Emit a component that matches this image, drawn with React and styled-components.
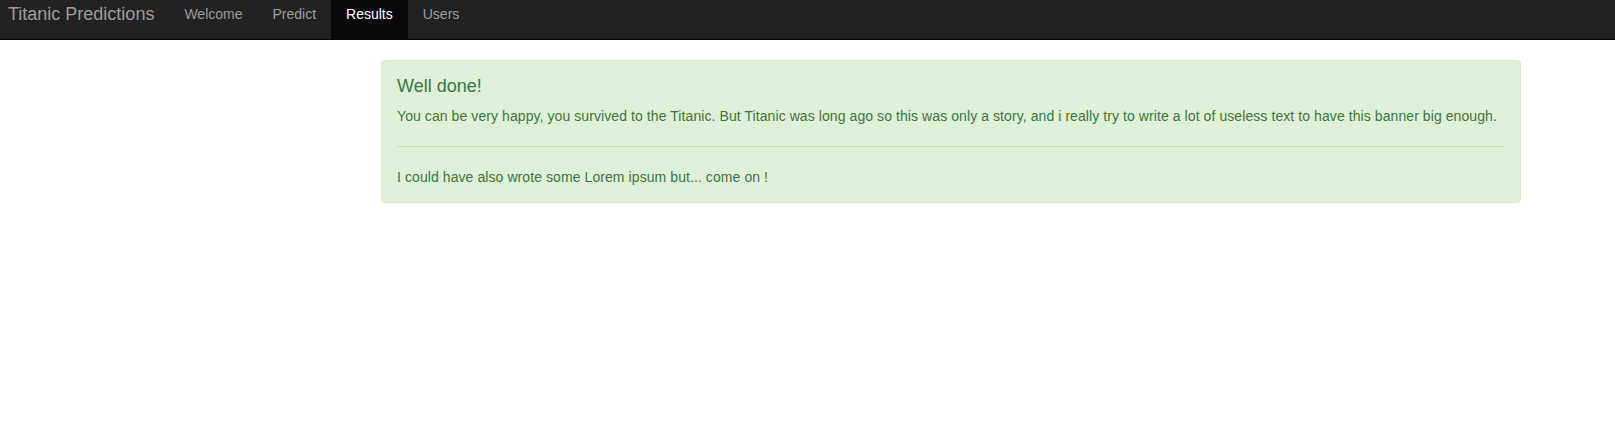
import React from "react";
import styled, { createGlobalStyle } from "styled-components";

const GlobalStyle = createGlobalStyle`
  * { box-sizing: border-box; }
  body {
    margin: 0;
    background: #fff;
    font-family: "Liberation Sans", Arial, Helvetica, sans-serif;
    font-size: 14px;
    line-height: 20px;
    color: #333;
  }
`;

const Navbar = styled.nav`
  display: flex;
  align-items: stretch;
  height: 40px;
  background-color: #222;
  border-bottom: 1px solid #080808;
`;

const Brand = styled.a`
  display: block;
  padding: 4px 15px 0 8px;
  font-size: 18px;
  line-height: 20px;
  color: #9d9d9d;
  text-decoration: none;
`;

const NavList = styled.ul`
  display: flex;
  margin: 0;
  padding: 0;
  list-style: none;
`;

const NavLink = styled.a`
  display: block;
  height: 100%;
  padding: 4px 15px 0;
  line-height: 20px;
  color: ${(p) => (p.$active ? "#fff" : "#9d9d9d")};
  background-color: ${(p) => (p.$active ? "#080808" : "transparent")};
  text-decoration: none;
`;

const Main = styled.main`
  padding: 20px 0 0 381px;
`;

const Alert = styled.div`
  width: 1140px;
  padding: 15px;
  background-color: #dff0d8;
  border: 1px solid #d6e9c6;
  border-radius: 4px;
  color: #3c763d;
`;

const AlertHeading = styled.h4`
  margin: 0 0 10px;
  font-size: 18px;
  font-weight: 500;
  line-height: 20px;
`;

const Para = styled.p`
  margin: 0;
  letter-spacing: 0.08px;
`;

const Divider = styled.hr`
  margin: 20px 0;
  border: 0;
  border-top: 1px solid #c9e2b3;
`;

const links = ["Welcome", "Predict", "Results", "Users"];

export default function App() {
  return (
    <>
      <GlobalStyle />
      <Navbar>
        <Brand href="#">Titanic Predictions</Brand>
        <NavList>
          {links.map((l) => (
            <li key={l}>
              <NavLink href="#" $active={l === "Results"}>
                {l}
              </NavLink>
            </li>
          ))}
        </NavList>
      </Navbar>
      <Main>
        <Alert>
          <AlertHeading>Well done!</AlertHeading>
          <Para>
            You can be very happy, you survived to the Titanic. But Titanic was long ago so this was only a
            story, and i really try to write a lot of useless text to have this banner big enough.
          </Para>
          <Divider />
          <Para>I could have also wrote some Lorem ipsum but... come on !</Para>
        </Alert>
      </Main>
    </>
  );
}
